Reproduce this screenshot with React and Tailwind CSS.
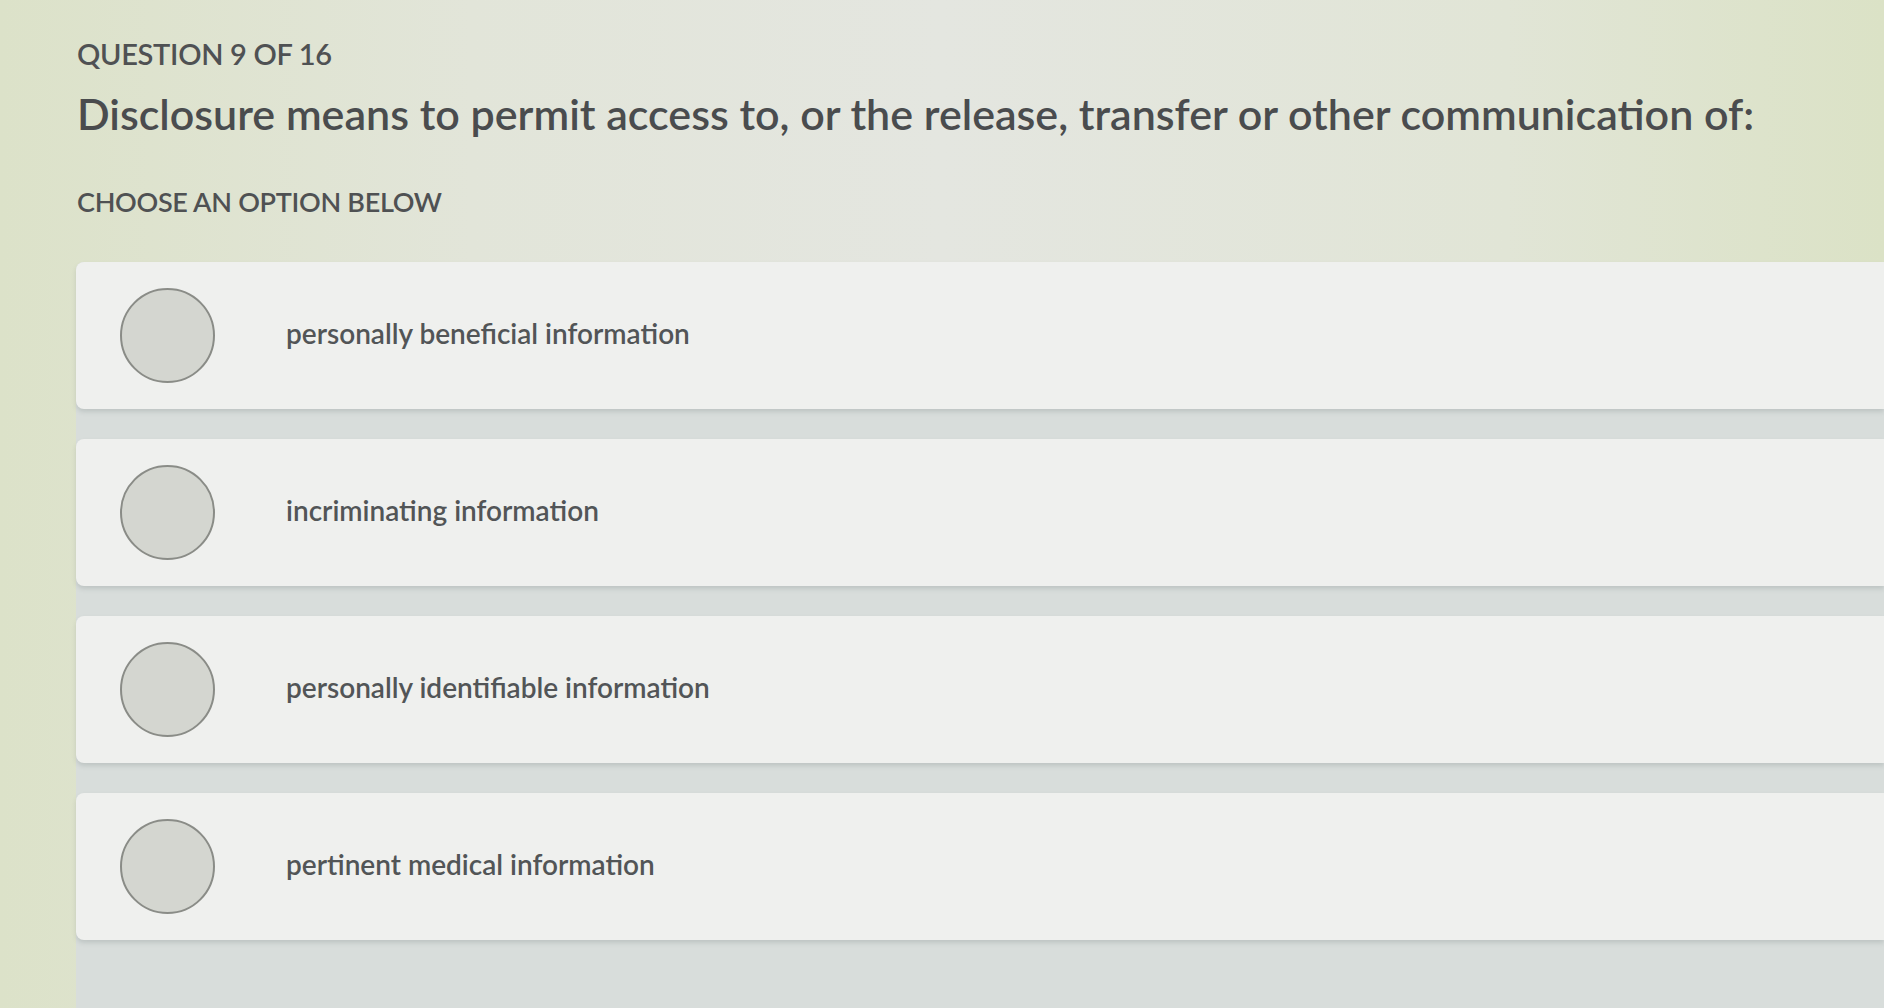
import React from 'react';

const options = [
    'personally beneficial information',
    'incriminating information',
    'personally identifiable information',
    'pertinent medical information',
];

export default function App() {
    return (
        <div
            className="min-h-screen h-[1008px] overflow-hidden flex flex-col bg-[linear-gradient(90deg,#dce2c9_0%,#e2e5d9_25%,#e4e6e0_50%,#e1e5d6_80%,#dbe2c6_100%)] text-[#4d4f51]"
            style={{ fontFamily: 'Lato, "Open Sans", sans-serif' }}
        >
            {/* Header */}
            <div className="pl-[77px] pt-[36px]">
                <p className="text-[29px] leading-[36px] font-semibold tracking-[-0.3px] text-[#4f5153]">QUESTION 9 OF 16</p>
                <h1 className="mt-[16px] text-[43px] leading-[52px] font-semibold text-[#4a4c4e]">
                    Disclosure means to permit access to, or the release, transfer or other communication of:
                </h1>
                <p className="mt-[46px] text-[27px] leading-[32px] font-semibold tracking-[-0.3px] text-[#4f5153]">CHOOSE AN OPTION BELOW</p>
            </div>

            {/* Options */}
            <div className="mt-[44px] ml-[76px] flex-1 flex flex-col gap-[30px] bg-[#d8dddb] rounded-tl-lg">
                {options.map((label) => (
                    <div
                        key={label}
                        className="h-[147px] flex items-center pl-[44px] bg-[#eff0ee] rounded-l-lg shadow-[0_3px_4px_rgba(120,130,130,0.25)]"
                    >
                        <div className="w-[95px] h-[95px] shrink-0 rounded-full bg-[#d4d6d0] border-[2.5px] border-[#8a8c87]"></div>
                        <span className="ml-[71px] -mt-[6px] text-[28px] font-semibold text-[#525557]">{label}</span>
                    </div>
                ))}
            </div>
        </div>
    );
}
